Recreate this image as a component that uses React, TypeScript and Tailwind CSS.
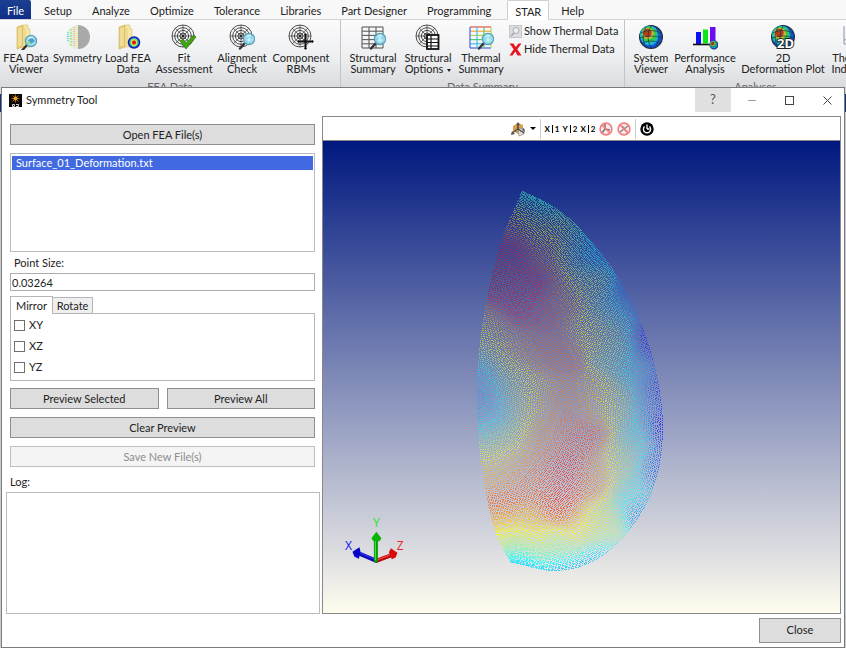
import React, { useMemo, useState } from "react";

type Vec = [number, number];

/* ---------- Ribbon icons ---------- */

const ICON = "h-[26px] w-[26px] shrink-0";

function Target() {
  return (
    <g fill="none" stroke="#222" strokeWidth="0.8">
      <circle cx="12" cy="12" r="11" />
      <circle cx="12" cy="12" r="8.3" />
      <circle cx="12" cy="12" r="5.6" />
      <circle cx="12" cy="12" r="3" />
      <path d="M12 1v22M1 12h22M4 4l16 16M20 4L4 20" strokeWidth="0.6" />
      <circle cx="12" cy="12" r="1" fill="#222" />
    </g>
  );
}

function Lens({ x = 18, y = 15 }: { x?: number; y?: number }) {
  return (
    <g>
      <path d={`M${x - 4} ${y + 4}l-5 5.5`} stroke="#333" strokeWidth="2.4" strokeLinecap="round" />
      <circle cx={x} cy={y} r="5.6" fill="#8fdcf0" fillOpacity="0.9" stroke="#5b9fb4" strokeWidth="1.2" />
      <path d={`M${x - 3} ${y - 2}q3-3 5-1M${x - 2} ${y + 1}h5M${x} ${y - 3}v6`} stroke="#e4fbff" strokeWidth="0.9" fill="none" />
    </g>
  );
}

function Folder() {
  return (
    <g>
      <path d="M4 3l6-2v22l-6 2z" fill="#e9cd74" stroke="#c9a64a" strokeWidth="0.5" />
      <path d="M10 1h5v4h2v18h-7z" fill="#f7e6a4" stroke="#d2b45c" strokeWidth="0.5" />
      <path d="M6 4v18M8 3.5v18" stroke="#fbf2c9" strokeWidth="0.8" />
      <path d="M12 4v17" stroke="#e7cf80" />
    </g>
  );
}

function Globe() {
  return (
    <g>
      <circle cx="13" cy="13" r="11.4" fill="#1450d8" stroke="#222c3c" strokeWidth="1.2" />
      <ellipse cx="11.5" cy="11.5" rx="9.6" ry="9.8" fill="#17b7dc" />
      <ellipse cx="11" cy="10.5" rx="7.8" ry="8" fill="#31c94f" />
      <ellipse cx="10" cy="9.5" rx="5.8" ry="5.8" fill="#d8b62c" />
      <ellipse cx="9.5" cy="9" rx="4.2" ry="4.2" fill="#b3401c" />
      <path d="M2.5 9q10-5 21 0M2 14q11-4 22 0M4 19q9-4 18 0M13 2q-6 11 0 22M8 3q-6 10 0 20M18 3q5 10 0 20" fill="none" stroke="#20343c" strokeWidth="0.7" />
    </g>
  );
}

function Grid({ colors }: { colors: string[] }) {
  return (
    <g fill="none" strokeWidth="1.1">
      {[0, 1, 2, 3, 4, 5].map((i) => (
        <path key={i} d={`M2 ${3 + i * 4.2}h21`} stroke={colors[i % colors.length]} />
      ))}
      {[0, 1, 2, 3].map((i) => (
        <path key={i} d={`M${2 + i * 7} 3v21`} stroke={colors[(5 - i) % colors.length]} />
      ))}
    </g>
  );
}

const icons: Record<string, React.ReactNode> = {
  viewer: (
    <>
      <Folder />
      <Lens x={18} y={17} />
      <path d="M15 16l4-2 3 3-4 3z" fill="#4d9bd0" />
      <path d="M14 18l3-1 1 3" fill="#9ad04d" />
    </>
  ),
  symmetry: (
    <>
      <path d="M13 1a12 12 0 0 0 0 24z" fill="#e4efe4" />
      <path d="M13 1a12 12 0 0 1 0 24z" fill="#a9a9a9" />
      <path d="M3 8v10" stroke="#7fdde4" strokeWidth="2" strokeDasharray="1 1" />
      <path d="M6 5v17" stroke="#b5e99c" strokeWidth="2" strokeDasharray="2 1" />
      <path d="M9 3v20" stroke="#f6b9a9" strokeWidth="2" strokeDasharray="1 1" />
      <path d="M11.500 2v22" stroke="#f4ea9a" strokeWidth="2" strokeDasharray="2 1" />
    </>
  ),
  load: (
    <>
      <Folder />
      <circle cx="19" cy="18.500" r="6.200" fill="#1616b8" />
      <circle cx="19" cy="18.500" r="4.700" fill="#18c5d0" />
      <circle cx="19" cy="18.500" r="3.400" fill="#e6dc28" />
      <circle cx="19" cy="18.500" r="2" fill="#d01818" />
    </>
  ),
  fit: (
    <>
      <Target />
      <path d="M9 17l3-2 3 4 8-8 2 2-10 12z" fill="#41a512" stroke="#2a7808" strokeWidth="0.7" />
    </>
  ),
  align: (
    <>
      <Target />
      <Lens x={20} y={15} />
    </>
  ),
  rbm: (
    <>
      <Target />
      <path d="M17.500 10v15M10 17.500h15" stroke="#111" strokeWidth="2" />
      <path d="M17.500 9l-1.500 2h3zM17.500 26l-1.500-2h3zM9 17.500l2-1.500v3zM26 17.500l-2-1.500v3z" fill="#111" />
    </>
  ),
  structural: (
    <>
      <Grid colors={["#5c5c5c"]} />
      <Lens x={20} y={15} />
    </>
  ),
  options: (
    <>
      <Target />
      <rect x="12" y="11" width="11.500" height="14" fill="#fff" stroke="#111" strokeWidth="1.800" />
      <path d="M12 15h11M12 18.500h11M12 22h11M16 11v14" stroke="#111" strokeWidth="1.200" />
    </>
  ),
  thermal: (
    <>
      <Grid colors={["#e8423a", "#f0a22c", "#a6d83c", "#46cf62", "#3ab8ea", "#3758e6"]} />
      <Lens x={20} y={15} />
    </>
  ),
  globe: <Globe />,
  perf: (
    <>
      <rect x="4" y="8" width="5" height="12" fill="#0a12f0" />
      <rect x="11" y="5.500" width="5" height="14" fill="#0be81a" />
      <rect x="18" y="3" width="5.500" height="16" fill="#6a0df2" />
      <path d="M1 20.500h25" stroke="#111" strokeWidth="1.600" />
      <g transform="translate(17 16) scale(.38)">
        <Globe />
      </g>
    </>
  ),
  globe2d: (
    <>
      <Globe />
      <text x="7" y="24" fontSize="13" fontWeight="700" fontFamily="Noto Sans, sans-serif" fill="#fff" stroke="#222" strokeWidth="1.800" paintOrder="stroke">
        2D
      </text>
    </>
  ),
  index: <path d="M5 2v18h21M5 16q8 0 12-6" fill="none" stroke="#8b93a8" />,
};

/* ---------- Ribbon ---------- */

const menuTabs = ["Setup", "Analyze", "Optimize", "Tolerance", "Libraries", "Part Designer", "Programming", "STAR", "Help"];

type Tool = { icon: string; lines: [string, string?]; width: string; menu?: boolean };

const feaTools: Tool[] = [
  { icon: "viewer", lines: ["FEA Data", "Viewer"], width: "w-[52px]" },
  { icon: "symmetry", lines: ["Symmetry"], width: "w-[51px]" },
  { icon: "load", lines: ["Load FEA", "Data"], width: "w-[50px]" },
  { icon: "fit", lines: ["Fit", "Assessment"], width: "w-[62px]" },
  { icon: "align", lines: ["Alignment", "Check"], width: "w-[54px]" },
  { icon: "rbm", lines: ["Component", "RBMs"], width: "w-[64px]" },
];
const summaryTools: Tool[] = [
  { icon: "structural", lines: ["Structural", "Summary"], width: "w-[54px]" },
  { icon: "options", lines: ["Structural", "Options"], width: "w-[56px]", menu: true },
  { icon: "thermal", lines: ["Thermal", "Summary"], width: "w-[50px]" },
];
const analysisTools: Tool[] = [
  { icon: "globe", lines: ["System", "Viewer"], width: "w-[42px]" },
  { icon: "perf", lines: ["Performance", "Analysis"], width: "w-[66px]" },
  { icon: "globe2d", lines: ["2D", "Deformation Plot"], width: "w-[90px]" },
  { icon: "index", lines: ["Thermal", "Indexing"], width: "w-[48px]" },
];

function ToolButton({ tool }: { tool: Tool }) {
  return (
    <button type="button" className={`flex shrink-0 flex-col items-center ${tool.width}`}>
      <svg viewBox="0 0 26 26" className={ICON} aria-hidden="true">
        {icons[tool.icon]}
      </svg>
      <span className="mt-[2px] text-center text-[11px] leading-[11px] whitespace-nowrap">
        {tool.lines[0]}
        <br />
        {tool.lines[1]}
        {tool.menu && <span className="ml-1 inline-block border-x-2 border-t-3 border-x-transparent border-t-[#222] align-middle" />}
      </span>
    </button>
  );
}

function Group({ label, className, children }: { label: string; className: string; children: React.ReactNode }) {
  return (
    <section className={`flex shrink-0 flex-col justify-between border-r border-[#c4c4c8] ${className}`}>
      <div className="flex pt-1">{children}</div>
      <div className="text-center text-[11px] leading-[14px] text-[#666]">{label}</div>
    </section>
  );
}

function Ribbon() {
  return (
    <header className="overflow-hidden">
      <nav className="flex h-[20px] items-stretch border-b border-[#d3d4d6] bg-[#f8f8f8] leading-[22px]">
        <button type="button" className="mr-[3px] w-[31px] rounded-tr-[2px] bg-linear-to-b from-[#1c3f91] to-[#0f2f86] text-white">
          File
        </button>
        {menuTabs.map((t) => (
          <button
            key={t}
            type="button"
            className={
              t === "STAR"
                ? "z-10 mr-[2px] mb-[-1px] ml-[6px] w-[42px] shrink-0 rounded-t-[2px] border border-b-0 border-[#cfd0d4] bg-white"
                : "shrink-0 px-[10px]"
            }
          >
            {t}
          </button>
        ))}
      </nav>
      <div className="flex h-[74px] bg-linear-to-b from-[#fbfbfc] via-[#eeeff1] to-[#d5d7da]">
        <Group label="FEA Data" className="w-[341px]">
          {feaTools.map((t) => (
            <ToolButton key={t.icon} tool={t} />
          ))}
        </Group>
        <Group label="Data Summary" className="w-[284px]">
          <div className="flex pl-[5px]">
            {summaryTools.map((t) => (
              <ToolButton key={t.icon} tool={t} />
            ))}
          </div>
          <div className="ml-[3px] flex flex-col gap-[3px]">
            <button type="button" className="flex h-[15px] items-center gap-[2px] whitespace-nowrap">
              <svg viewBox="0 0 13 13" className="h-[13px] w-[13px]" aria-hidden="true">
                <rect x="0.500" y="0.500" width="12" height="12" fill="#dcdde0" stroke="#c6c7ca" />
                <circle cx="7" cy="5.500" r="3" fill="#eceef0" stroke="#a9acb1" />
                <path d="M5 8l-3 3" stroke="#a0a3a8" strokeWidth="1.500" />
              </svg>
              Show Thermal Data
            </button>
            <button type="button" className="flex h-[15px] items-center gap-[2px] whitespace-nowrap">
              <svg viewBox="0 0 13 13" className="h-[13px] w-[13px]" aria-hidden="true">
                <path d="M0.500 0.500h4l2.200 3.500L9.500 0.500h3L8.300 6.300l4.200 6.200h-4L6.300 8.600 3.500 12.500h-3l4.200-6.200z" fill="#e81420" />
              </svg>
              Hide Thermal Data
            </button>
          </div>
        </Group>
        <Group label="Analyses" className="w-[262px]">
          <div className="flex pl-[5px]">
            {analysisTools.map((t) => (
              <ToolButton key={t.icon} tool={t} />
            ))}
          </div>
        </Group>
      </div>
    </header>
  );
}

/* ---------- Surface point cloud ---------- */

const leftEdge: Vec[] = [[522, 191], [503, 236], [489, 289], [480, 343], [477, 398], [480, 452], [488, 502], [497, 535], [511, 562]];
const rightEdge: Vec[] = [
  [522, 191], [555, 208], [587, 236], [616, 274], [641, 323], [657, 376], [663, 430], [655, 482], [632, 526], [596, 559], [554, 570], [511, 561],
];

/* x, y, normalised deformation */
const samples: [number, number, number][] = [
  [520, 195, 0.42], [545, 203, 0.4], [513, 222, 0.72], [540, 225, 0.6], [510, 250, 0.91], [500, 280, 0.94], [530, 280, 0.91], [515, 305, 0.9],
  [545, 255, 0.74], [545, 310, 0.84], [490, 325, 0.7], [484, 345, 0.54], [479, 400, 0.24], [497, 402, 0.34], [482, 375, 0.32], [510, 350, 0.7],
  [512, 375, 0.56], [520, 400, 0.58], [540, 400, 0.7], [530, 350, 0.78], [560, 350, 0.78], [563, 300, 0.73], [590, 330, 0.62], [575, 250, 0.48],
  [598, 252, 0.32], [590, 285, 0.54], [612, 310, 0.44], [617, 350, 0.5], [664, 390, 0.06], [652, 345, 0.1], [632, 295, 0.18], [648, 400, 0.3],
  [638, 370, 0.34], [618, 400, 0.55], [595, 400, 0.7], [565, 410, 0.78], [588, 440, 0.82], [565, 470, 0.86], [595, 475, 0.76], [560, 505, 0.84],
  [535, 480, 0.8], [500, 505, 0.8], [487, 475, 0.72], [484, 452, 0.58], [482, 425, 0.34], [508, 438, 0.54], [540, 445, 0.76], [515, 465, 0.73],
  [530, 525, 0.7], [500, 530, 0.65], [515, 545, 0.5], [515, 564, 0.26], [555, 573, 0.28], [550, 546, 0.52], [585, 525, 0.64], [600, 558, 0.3],
  [605, 525, 0.54], [635, 490, 0.4], [620, 460, 0.55], [668, 430, 0.06], [659, 470, 0.18], [645, 515, 0.24], [640, 440, 0.4],
];

function along(points: Vec[], t: number): Vec {
  const f = Math.min(0.99999, Math.max(0, t)) * (points.length - 1);
  const i = Math.floor(f);
  const u = f - i;
  const p = (k: number) => points[Math.min(points.length - 1, Math.max(0, k))];
  const mix = (c: 0 | 1) => {
    const [a, b, d, e] = [p(i - 1)[c], p(i)[c], p(i + 1)[c], p(i + 2)[c]];
    return 0.5 * (2 * b + (d - a) * u + (2 * a - 5 * b + 4 * d - e) * u * u + (3 * b - a - 3 * d + e) * u * u * u);
  };
  return [mix(0), mix(1)];
}

function field(x: number, y: number) {
  let sum = 0;
  let weight = 0;
  for (const [sx, sy, v] of samples) {
    const w = Math.exp(-((sx - x) ** 2 + (sy - y) ** 2) / 360) + 1e-9;
    sum += v * w;
    weight += w;
  }
  return sum / weight;
}

function jet(v: number) {
  const c = (k: number) => Math.round(255 * Math.min(1, Math.max(0, 1.5 - Math.abs(4 * v - k))));
  return `rgb(${c(3)},${c(2)},${c(1)})`;
}

function buildCloud() {
  const rings = 106;
  const layers = new Map<string, { color: string; opacity: number; d: string[] }>();
  let seed = 7;
  const jitter = () => {
    seed = (seed * 16807) % 2147483647;
    return (seed / 2147483647 - 0.5) * 0.6;
  };
  for (let k = 0; k <= rings; k++) {
    const r = k / rings;
    const count = Math.max(1, Math.round(Math.PI * k));
    const shake = k === rings ? 0 : 1;
    for (let j = 0; j <= count; j++) {
      const theta = (Math.PI * j) / count;
      const b = -r * Math.cos(theta);
      const a = r * Math.sin(theta);
      const half = Math.sqrt(Math.max(1e-6, 1 - b * b));
      const left = along(leftEdge, (b + 1) / 2);
      const right = along(rightEdge, Math.acos(-b) / Math.PI);
      const s = Math.min(1, a / half);
      const x = left[0] + (right[0] - left[0]) * s + jitter() * shake;
      const y = left[1] + (right[1] - left[1]) * s + jitter() * shake;
      const level = Math.round(field(x, y) * 32);
      const band = Math.min(4, Math.max(0, Math.floor((y - 190) / 76)));
      const key = `${level}-${band}`;
      if (!layers.has(key)) layers.set(key, { color: jet(level / 32), opacity: 0.46 + band * 0.06, d: [] });
      layers.get(key)!.d.push(`M${Math.round(x)} ${Math.round(y)}h1v1h-1z`);
    }
  }
  return [...layers.entries()];
}

function Scene() {
  const cloud = useMemo(buildCloud, []);
  return (
    <svg viewBox="323 141 518 472" className="h-full w-full" role="img" aria-label="Surface deformation points">
      <g shapeRendering="crispEdges">
        {cloud.map(([key, layer]) => (
          <path key={key} d={layer.d.join("")} fill={layer.color} fillOpacity={layer.opacity} />
        ))}
      </g>
      <g strokeLinecap="round">
        <path d="M376 561L357 553" stroke="#0b0bb4" strokeWidth="4" />
        <path d="M376 560L358 552.500" stroke="#2a2af0" strokeWidth="1.500" />
        <path d="M352.500 552l7-4.500 1 4-1.500 7.500-4.500-2z" fill="#0606c8" />
        <path d="M377 561l16-6" stroke="#b80808" strokeWidth="4" />
        <path d="M378 560l14-5.500" stroke="#f04040" strokeWidth="1.500" />
        <path d="M397.500 553l-6.500-4.500-2 4 3 7 4-2z" fill="#d80a0a" />
        <path d="M376 561v-21" stroke="#069a06" strokeWidth="4" />
        <path d="M375.500 560v-20" stroke="#3be03b" strokeWidth="1.300" />
        <path d="M376.500 532l5 6.500-2 3h-6l-2-3z" fill="#08b408" />
      </g>
      <g fontFamily="Noto Sans, sans-serif" fontSize="12">
        <text x="345" y="550" fill="#1c1ce8">X</text>
        <text x="373" y="527" fill="#2ee62e">Y</text>
        <text x="397" y="550" fill="#f02828">Z</text>
      </g>
    </svg>
  );
}

/* ---------- View toolbar ---------- */

function AxisGlyph({ a, b }: { a: string; b: string }) {
  return (
    <button type="button" className="flex w-[15px] items-center justify-between text-[8px] leading-[12px] font-bold text-black">
      <span>{a}</span>
      <span className="h-[8px] w-px bg-black" />
      <span>{b}</span>
    </button>
  );
}

function NoSign({ label, children }: { label: string; children: React.ReactNode }) {
  return (
    <button type="button" aria-label={label}>
      <svg viewBox="0 0 14 14" className="h-[14px] w-[14px]">
        <circle cx="7" cy="7" r="5.900" fill="#fbeaea" />
        {children}
        <circle cx="7" cy="7" r="5.900" fill="none" stroke="#f47c7c" strokeWidth="1.600" />
        <path d="M3 3l8 8" stroke="#f47c7c" strokeWidth="1.600" />
      </svg>
    </button>
  );
}

function ViewToolbar() {
  return (
    <div className="flex h-[24px] shrink-0 items-center justify-center border-b border-[#888] bg-white">
      <button type="button" aria-label="View orientation" className="flex items-center gap-[4px]">
        <svg viewBox="0 0 16 16" className="h-[16px] w-[16px]">
          <path d="M3 5l5-3 5 2v6l-5 3-5-3z" fill="#d8a04e" />
          <path d="M8 7l6 1v5l-5 2z" fill="#e7e2da" stroke="#8a8478" strokeWidth="0.700" />
          <path d="M8 2v6M8 8l-6 4M8 8l6 4" stroke="#4a4a4a" strokeWidth="1.500" fill="none" />
          <path d="M6 4l2-3 2 3zM1 14l1-4 3 3zM12 9l3 2-1-4z" fill="#555" />
        </svg>
        <span className="border-x-3 border-t-3 border-x-transparent border-t-black" />
      </button>
      <span className="mx-[4px] h-[20px] w-px bg-[#ccc]" />
      <div className="flex items-center gap-[3px]">
        <AxisGlyph a="X" b="1" />
        <AxisGlyph a="Y" b="2" />
        <AxisGlyph a="X" b="2" />
      </div>
      <div className="ml-[3px] flex items-center gap-[4px]">
        <NoSign label="Disable rotation">
          <path d="M6 2v5l-3 4M6 7l5 1" stroke="#777" strokeWidth="1.500" fill="none" />
        </NoSign>
        <NoSign label="Disable panning">
          <path d="M3 10l8-6M5 4l5 6" stroke="#888" strokeWidth="1.500" fill="none" />
        </NoSign>
      </div>
      <span className="mx-[4px] h-[20px] w-px bg-[#ccc]" />
      <button type="button" aria-label="Reset view">
        <svg viewBox="0 0 14 14" className="h-[14px] w-[14px]">
          <circle cx="7" cy="7" r="6.700" fill="#000" />
          <path d="M4.500 4.600a3.600 3.600 0 1 0 5 0" fill="none" stroke="#fff" strokeWidth="1.400" />
          <path d="M7 2.500v4.500M7 7h2.500" stroke="#fff" strokeWidth="1.300" fill="none" />
        </svg>
      </button>
    </div>
  );
}

/* ---------- Dialog ---------- */

const BUTTON = "h-[21px] border border-[#8f8f8f] bg-[#dddddd] text-center leading-[19px]";

function TitleBar() {
  return (
    <div className="flex h-[24px] shrink-0 items-center pl-[7px]">
      <svg viewBox="0 0 13 13" className="mr-[4px] h-[13px] w-[13px]" aria-hidden="true">
        <rect width="13" height="13" fill="#0c0904" />
        <path d="M6.500 0.500v8M2.500 4.500h8M3.500 1.500l6 6M9.500 1.500l-6 6" stroke="#a8660c" strokeWidth="0.900" />
        <circle cx="6.500" cy="4.500" r="2" fill="#f0a01c" />
        <path d="M3.500 10.500h2v2h-2zM7 10.500h2.500v2H7" stroke="#eee" strokeWidth="0.900" fill="none" />
      </svg>
      <h1 className="grow">Symmetry Tool</h1>
      <button type="button" aria-label="Help" className="h-[24px] w-[36px] bg-[#e1e1e1] text-[13px] text-[#555]">
        ?
      </button>
      <button type="button" aria-label="Minimize" className="flex h-[24px] w-[38px] items-center justify-center pl-[3px]">
        <span className="h-px w-[8px] bg-[#999]" />
      </button>
      <button type="button" aria-label="Maximize" className="flex h-[24px] w-[38px] items-center justify-center pl-[3px]">
        <span className="h-[9px] w-[9px] border border-[#444]" />
      </button>
      <button type="button" aria-label="Close window" className="flex h-[24px] w-[37px] items-center justify-center pl-[3px]">
        <svg viewBox="0 0 9 9" className="h-[9px] w-[9px]">
          <path d="M0.500 0.500l8 8M8.500 0.500l-8 8" stroke="#444" />
        </svg>
      </button>
    </div>
  );
}

function Controls() {
  const [size, setSize] = useState("0.03264");
  return (
    <div className="flex w-[314px] shrink-0 flex-col">
      <div className="mr-[5px] ml-[4px] flex flex-col">
        <button type="button" className={BUTTON}>
          Open FEA File(s)
        </button>
        <ul role="listbox" aria-label="FEA files" className="mt-[8px] h-[99px] border border-[#b9bcc2] p-px pt-[2px]">
          <li role="option" aria-selected="true" className="h-[14px] bg-[#4169e1] pl-[4px] leading-[14px] text-white">
            Surface_01_Deformation.txt
          </li>
        </ul>
        <label htmlFor="point-size" className="mt-[2px] ml-[4px] h-[19px] leading-[18px]">
          Point Size:
        </label>
        <input
          id="point-size"
          value={size}
          onChange={(e) => setSize(e.target.value)}
          className="h-[18px] border border-[#abadb3] px-px leading-[16px] outline-none"
        />
        <div role="tablist" className="mt-[4px] flex h-[18px] items-end">
          <button type="button" role="tab" aria-selected="true" className="z-10 mb-[-1px] h-[18px] w-[43px] border border-b-0 border-[#b4b6ba] bg-white leading-[15px]">
            Mirror
          </button>
          <button type="button" role="tab" aria-selected="false" className="h-[16px] w-[40px] border border-b-0 border-l-0 border-[#b4b6ba] bg-[#efefef] leading-[15px]">
            Rotate
          </button>
        </div>
        <div role="tabpanel" className="flex h-[68px] flex-col gap-[5px] border border-[#b4b6ba] pt-[3px] pl-[3px]">
          {["XY", "XZ", "YZ"].map((axis) => (
            <label key={axis} className="flex h-[16px] items-center gap-[4px] leading-[16px]">
              <input type="checkbox" className="h-[11px] w-[11px] appearance-none border border-[#707070] bg-white checked:bg-[#4169e1]" />
              {axis}
            </label>
          ))}
        </div>
        <div className="mt-[7px] grid grid-cols-2 gap-[8px]">
          <button type="button" className={BUTTON}>
            Preview Selected
          </button>
          <button type="button" className={BUTTON}>
            Preview All
          </button>
        </div>
        <button type="button" className={`mt-[8px] ${BUTTON}`}>
          Clear Preview
        </button>
        <button type="button" disabled className="mt-[8px] h-[21px] border border-[#bcbfc4] bg-[#f4f4f4] leading-[19px] text-[#8d8d8d]">
          Save New File(s)
        </button>
        <label htmlFor="log" className="mt-[7px] h-[18px] leading-[16px]">
          Log:
        </label>
      </div>
      <textarea id="log" readOnly className="min-h-0 grow resize-none border border-[#b9bcc2] outline-none" />
    </div>
  );
}

export default function App() {
  return (
    <div className="relative h-screen overflow-hidden bg-[#c9cbcf] font-['Lato','Noto_Sans',sans-serif] text-[11px] text-[#222]">
      <Ribbon />
      <div className="h-[18px] w-full bg-[#0f2f86]" />
      <div role="dialog" aria-label="Symmetry Tool" className="absolute inset-x-px top-[87px] bottom-0 z-20 flex flex-col border border-[#7b7b7b] bg-white">
        <TitleBar />
        <main className="flex min-h-0 grow gap-[2px] pt-[4px] pr-[3px] pl-[4px]">
          <div className="flex pt-[8px]">
            <Controls />
          </div>
          <div className="flex min-w-0 grow flex-col border border-[#888]">
            <ViewToolbar />
            <div className="min-h-0 grow bg-[linear-gradient(#00187f,#e4e4e4_90%,#fffdee)]">
              <Scene />
            </div>
          </div>
        </main>
        <footer className="flex h-[33px] shrink-0 justify-end pt-[4px] pr-[3px]">
          <button type="button" className="h-[25px] w-[82px] border border-[#8f8f8f] bg-[#dddddd]">
            Close
          </button>
        </footer>
      </div>
    </div>
  );
}
